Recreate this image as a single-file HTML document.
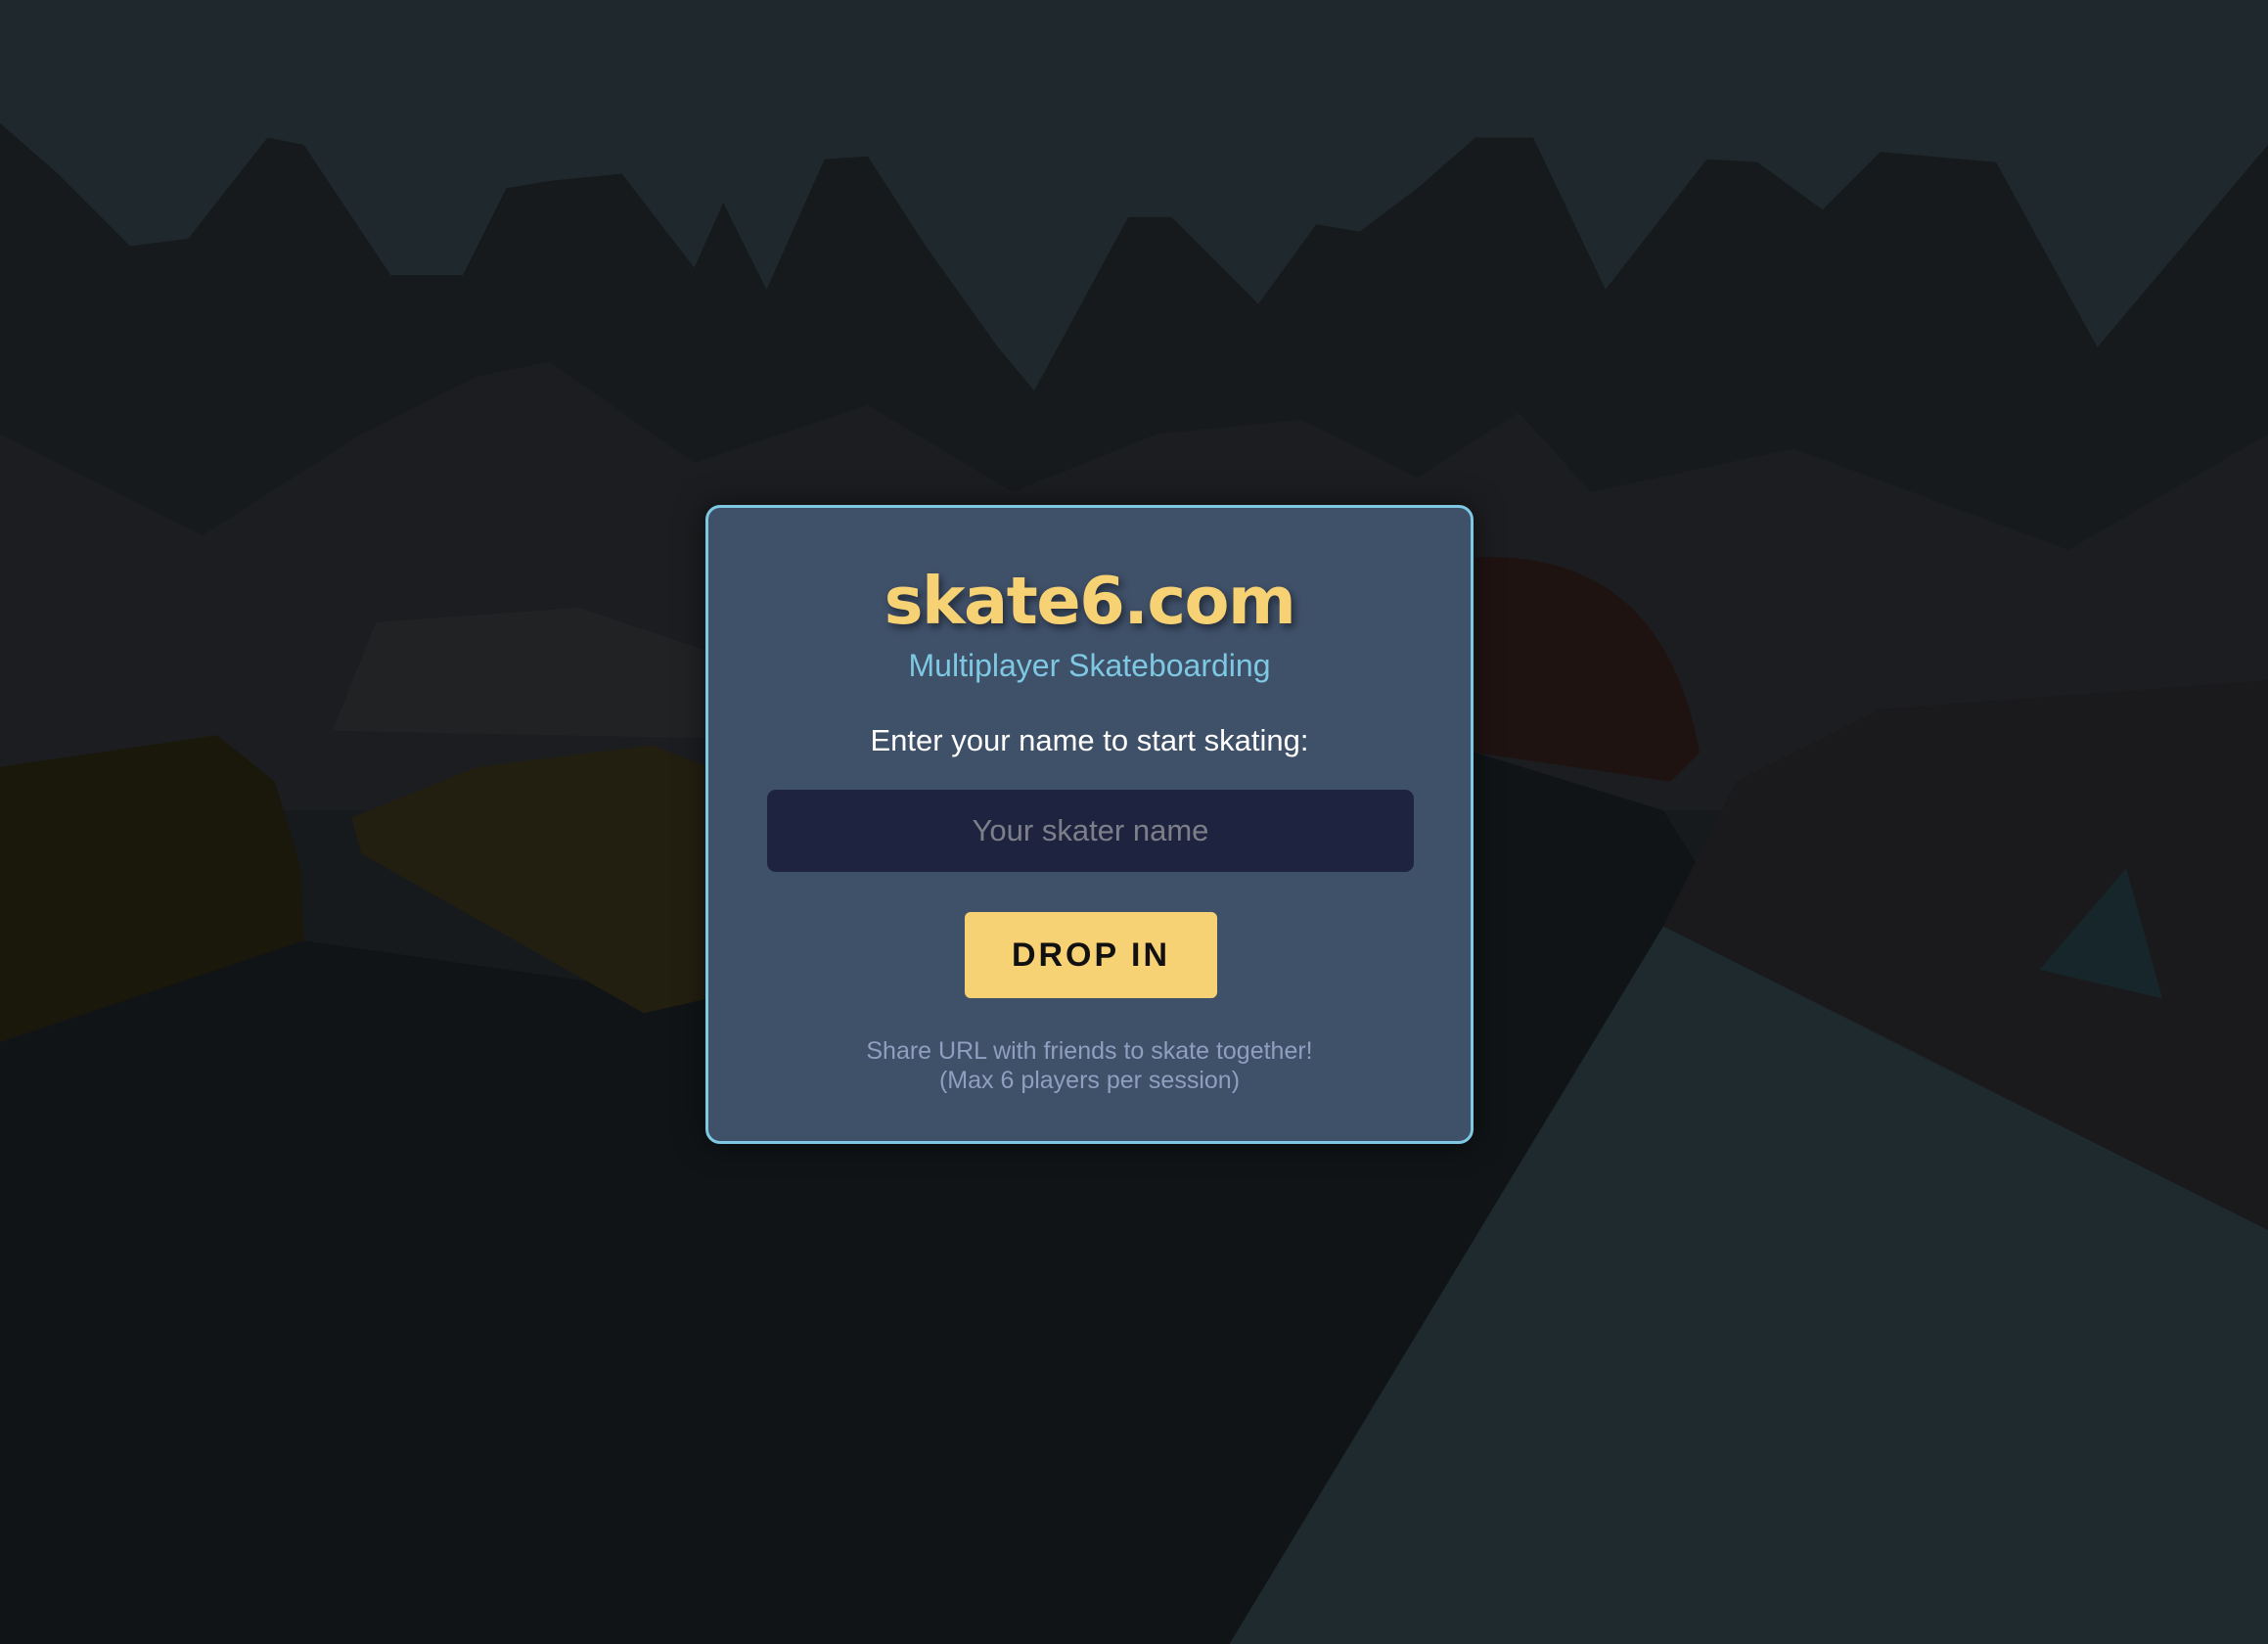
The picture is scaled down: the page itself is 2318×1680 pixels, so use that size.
<!DOCTYPE html>
<html><head><meta charset="utf-8"><style>
html,body{margin:0;padding:0;width:2318px;height:1680px;overflow:hidden;background:#1f292d;font-family:"Liberation Sans",Arial,sans-serif}
svg.bg{position:absolute;left:0;top:0;width:2318px;height:1680px}
.box{position:absolute;left:721px;top:516px;width:779px;height:647px;background:#3f5069;border:3px solid #7ec8e3;border-radius:15px;box-sizing:content-box;text-align:center;box-shadow:0 0 30px rgba(0,0,0,.5)}
.t{position:absolute;left:0;right:0;top:56px;font-family:"DejaVu Sans",Verdana,sans-serif;font-weight:bold;font-size:67px;color:#f7d274;text-shadow:3px 4px 8px rgba(0,0,0,.45);letter-spacing:-1.5px}
.s{position:absolute;left:0;right:0;top:143px;font-size:32px;color:#7ec8e3}
.e{position:absolute;left:0;right:0;top:220px;font-size:31px;color:#fff}
.in{position:absolute;left:60px;width:661px;top:288px;height:84px;background:#1e2440;border-radius:9px;line-height:84px;font-size:31px;color:#7d7f88}
.btn{position:absolute;left:262px;width:258px;top:413px;height:88px;background:#f7d274;border-radius:6px;line-height:88px;font-size:34px;font-weight:bold;letter-spacing:3px;color:#111}
.f{position:absolute;left:0;right:0;top:540px;font-size:25px;line-height:30px;color:#8f9fc0}
</style></head><body>
<svg class="bg" viewBox="0 0 1568 1136" preserveAspectRatio="none">
<rect width="1568" height="1136" fill="#1f292d"/>
<polygon fill="#171a1c" points="0,85 40,120 90,170 130,165 185,95 210,100 270,190 320,190 350,130 380,125 430,120 480,185 500,140 530,200 570,110 600,108 640,170 690,240 715,270 780,150 810,150 870,210 910,155 940,160 980,130 1020,95 1060,95 1110,200 1180,110 1215,112 1260,145 1300,105 1380,112 1450,240 1568,100 1568,700 0,700"/>
<polygon fill="#1c1d20" points="0,300 140,370 250,300 330,260 380,250 480,320 600,280 700,340 800,300 900,290 980,330 1050,285 1100,340 1240,310 1430,380 1568,300 1568,560 0,560"/>
<polygon fill="#212224" points="230,505 260,430 400,420 490,450 490,510"/>
<polygon fill="#101416" points="0,720 210,650 490,690 720,540 1020,520 1150,560 1200,640 850,1136 0,1136"/>
<polygon fill="#1f2a2e" points="850,1136 1150,640 1568,850 1568,1136"/>
<polygon fill="#1a1a1c" points="1150,640 1200,540 1300,490 1568,470 1568,850"/>
<polygon fill="#1a180b" points="0,530 150,508 190,540 208,600 210,650 0,720"/>
<polygon fill="#231f10" points="243,565 330,530 450,515 490,530 490,690 445,700 250,590"/>
<path fill="#1f1312" d="M1020,385 Q1150,380 1175,520 L1155,540 L1020,520 Z"/>
<polygon fill="#16262a" points="1410,670 1470,600 1495,690"/>
</svg>
<div class="box">
<div class="t">skate6.com</div>
<div class="s">Multiplayer Skateboarding</div>
<div class="e">Enter your name to start skating:</div>
<div class="in">Your skater name</div>
<div class="btn">DROP IN</div>
<div class="f">Share URL with friends to skate together!<br>(Max 6 players per session)</div>
</div>
</body></html>
